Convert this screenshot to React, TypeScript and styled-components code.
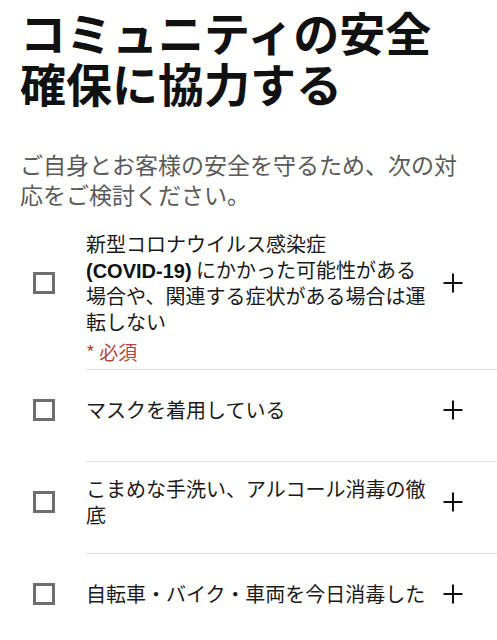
import React from "react";
import styled, { createGlobalStyle } from "styled-components";

const GlobalStyle = createGlobalStyle`
  html, body {
    margin: 0;
    padding: 0;
    background: #ffffff;
  }
  body {
    font-family: "Noto Sans CJK JP", "Noto Sans", sans-serif;
    color: #141414;
    overflow-x: hidden;
  }
`;

const Page = styled.main`
  padding: 6px 0 0 20px;
  width: 497px;
  box-sizing: border-box;
`;

const Title = styled.h1`
  margin: 0;
  padding-right: 20px;
  font-size: 46px;
  line-height: 51px;
  font-weight: 700;
  color: #111111;
`;

const Lead = styled.p`
  margin: 41px 20px 0 0;
  font-size: 23px;
  line-height: 30px;
  color: #5a5a5a;
`;

const List = styled.ul`
  list-style: none;
  margin: 22px 0 0;
  padding: 0;
`;

const Item = styled.li`
  display: flex;
  flex-direction: column;
`;

const Row = styled.label`
  display: flex;
  align-items: center;
  min-height: 80px;
  cursor: pointer;
`;

const Box = styled.span`
  flex-shrink: 0;
  width: 22px;
  height: 22px;
  margin-left: 13px;
  box-sizing: border-box;
  border: 3px solid #6e6e6e;
  background: #fff;
`;

const Text = styled.span`
  width: 345px;
  margin-left: 31px;
  font-size: 20px;
  line-height: 26px;
  color: #1a1a1a;
`;

const Latin = styled.span`
  white-space: nowrap;
  font-family: "Liberation Sans", "Noto Sans CJK JP", sans-serif;
  font-weight: 600;
  line-height: 20px;
  color: #111;
`;

const PlusIcon = styled.svg`
  flex-shrink: 0;
  width: 20px;
  height: 20px;
  margin-left: 12px;
`;

const Required = styled.div`
  margin: 5px 0 0 66px;
  font-size: 19px;
  line-height: 24px;
  color: #b4453b;
`;

const Divider = styled.hr<{ $gap: number }>`
  border: 0;
  height: 1px;
  margin: ${(p) => p.$gap}px 0 0 66px;
  background: #e2e2e2;
`;

const Plus = () => (
  <PlusIcon viewBox="0 0 20 20" aria-hidden="true">
    <path d="M10 0.5V19.5M0.5 10H19.5" stroke="#111" strokeWidth="2" fill="none" />
  </PlusIcon>
);

type Entry = { text: React.ReactNode; required?: boolean };

const entries: Entry[] = [
  {
    text: (
      <>
        新型コロナウイルス感染症 <Latin>(COVID-19)</Latin> にかかった可能性がある場合や、関連する症状がある場合は運転しない
      </>
    ),
    required: true,
  },
  { text: "マスクを着用している" },
  { text: "こまめな手洗い、アルコール消毒の徹底" },
  { text: "自転車・バイク・車両を今日消毒した" },
];

export default function App() {
  return (
    <>
      <GlobalStyle />
      <Page>
        <Title>コミュニティの安全確保に協力する</Title>
        <Lead>ご自身とお客様の安全を守るため、次の対応をご検討ください。</Lead>
        <List>
          {entries.map((e, i) => (
            <Item key={i}>
              <Row>
                <Box />
                <Text>{e.text}</Text>
                <Plus />
              </Row>
              {e.required && <Required>* 必須</Required>}
              {i < entries.length - 1 && <Divider $gap={e.required ? 5 : 11} />}
            </Item>
          ))}
        </List>
      </Page>
    </>
  );
}
